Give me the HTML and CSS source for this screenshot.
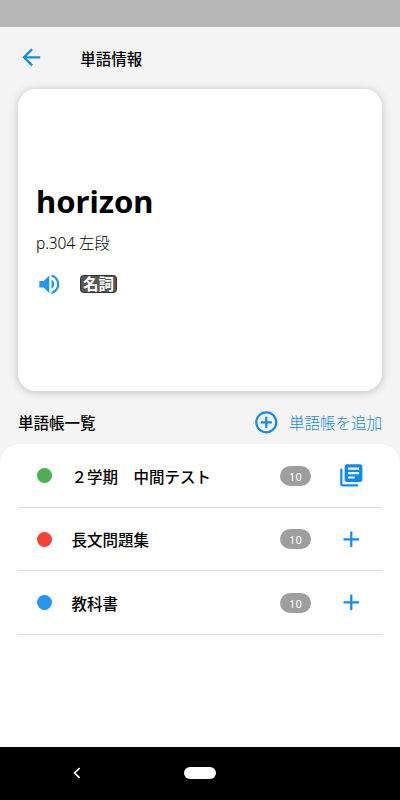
FILE: index.html
```html
<!DOCTYPE html>
<html lang="ja">
<head>
<meta charset="utf-8">
<title>単語情報</title>
<link rel="stylesheet" href="styles.css">
</head>
<body>
<div class="status"></div>
<header class="appbar">
  <svg class="icon" viewBox="0 0 24 24"><path d="M20 11H7.83l5.59-5.59L12 4l-8 8 8 8 1.41-1.41L7.83 13H20v-2z"/></svg>
  <h1 class="title">単語情報</h1>
</header>
<section class="card">
  <h2 class="word">horizon</h2>
  <p class="page">p.304 左段</p>
  <div class="meta">
    <svg class="icon speaker" viewBox="0 0 24 24"><path d="M3 9v6h4l5 5V4L7 9H3zm13.5 3c0-1.77-1.02-3.29-2.5-4.03v8.05c1.48-.73 2.5-2.25 2.5-4.02zM14 3.23v2.06c2.89.86 5 3.54 5 6.71s-2.11 5.85-5 6.71v2.06c4.01-.91 7-4.49 7-8.77s-2.99-7.86-7-8.77z"/></svg>
    <span class="tag">名詞</span>
  </div>
</section>
<div class="section-head">
  <h2 class="label">単語帳一覧</h2>
  <div class="add">
    <svg class="icon" viewBox="0 0 24 24"><path d="M13 7h-2v4H7v2h4v4h2v-4h4v-2h-4V7zm-1-5C6.48 2 2 6.48 2 12s4.48 10 10 10 10-4.48 10-10S17.52 2 12 2zm0 18c-4.41 0-8-3.59-8-8s3.59-8 8-8 8 3.59 8 8-3.59 8-8 8z"/></svg>
    <span class="add-text">単語帳を追加</span>
  </div>
</div>
<main class="list">
  <div class="row">
    <span class="dot green"></span><span class="name">２学期　中間テスト</span><span class="count">10</span>
    <svg class="icon" viewBox="0 0 24 24"><path d="M4 6H2v14c0 1.1.9 2 2 2h14v-2H4V6zm16-4H8c-1.1 0-2 .9-2 2v12c0 1.1.9 2 2 2h12c1.1 0 2-.9 2-2V4c0-1.1-.9-2-2-2zm-1 5H9V5h10v2zm0 4H9V9h10v2zm-4 4H9v-2h6v2z"/></svg>
  </div>
  <div class="row">
    <span class="dot red"></span><span class="name">長文問題集</span><span class="count">10</span>
    <svg class="icon" viewBox="0 0 24 24"><path d="M19 13h-6v6h-2v-6H5v-2h6V5h2v6h6v2z"/></svg>
  </div>
  <div class="row">
    <span class="dot blue"></span><span class="name">教科書</span><span class="count">10</span>
    <svg class="icon" viewBox="0 0 24 24"><path d="M19 13h-6v6h-2v-6H5v-2h6V5h2v6h6v2z"/></svg>
  </div>
</main>
<nav class="navbar">
  <svg class="back" viewBox="0 0 8 12"><path d="M6.6 1.2 1.6 6l5 4.8"/></svg>
  <span class="home"></span>
</nav>
</body>
</html>
```
FILE: styles.css
```css
* { box-sizing: border-box; }
body {
  margin: 0;
  width: 400px;
  height: 800px;
  overflow: hidden;
  display: flex;
  flex-direction: column;
  background: #f4f4f4;
  color: #000;
  font-family: "Noto Sans CJK JP", sans-serif;
  font-size: 15.5px;
}
h1, h2, p { margin: 0; }
.icon { width: 26.6px; height: 26.6px; fill: #0d8bf5; flex: none; display: block; }
.status { height: 26.5px; background: #b7b7b7; flex: none; }
.appbar {
  height: 62.5px;
  flex: none;
  display: flex;
  align-items: center;
  padding-left: 18px;
}
.title {
  margin-left: 35.6px;
  font-size: 15.5px;
  font-weight: 500;
  line-height: 24px;
}
.card {
  height: 302px;
  flex: none;
  margin: 0 18px;
  padding: 89px 18px 0;
  border-radius: 17.5px;
  background: #fff;
  box-shadow: 0 1px 8px rgba(0, 0, 0, .22);
}
.word {
  font-family: "Noto Sans", sans-serif;
  font-size: 31px;
  font-weight: 700;
  line-height: 46px;
}
.page {
  font-family: "Noto Sans", "Noto Sans CJK JP", sans-serif;
  font-size: 15.5px;
  letter-spacing: -.12px;
  font-weight: 300;
  line-height: 24px;
  margin-top: 7px;
}
.meta { display: flex; align-items: center; margin-top: 15.5px; }
.speaker { fill: #2196f3; }
.tag {
  width: 37px;
  height: 18px;
  margin-left: 17.4px;
  border: 1px solid #333;
  border-radius: 3.5px;
  background: #555;
  color: #fff;
  font-weight: 700;
  line-height: 15px;
  text-align: center;
}
.section-head {
  height: 53.3px;
  flex: none;
  padding: 9px 18px 0;
  display: flex;
  justify-content: space-between;
  align-items: flex-start;
}
.label { font-size: 15.5px; font-weight: 500; line-height: 44px; }
.add { display: flex; align-items: center; height: 44px; color: #0d8bf5; }
.add-text { margin-left: 9px; font-weight: 300; }
.list {
  flex: 1;
  padding: 0 18px;
  border-radius: 20px 20px 0 0;
  background: #fff;
}
.row {
  height: 63.5px;
  padding: 0 17.5px 0 19px;
  display: flex;
  align-items: center;
  border-bottom: 1px solid #dcdcdc;
}
.dot { width: 15px; height: 15px; border-radius: 50%; flex: none; }
.green { background: #4caf50; }
.red { background: #f44336; }
.blue { background: #2196f3; }
.name { flex: 1; margin-left: 19.4px; font-weight: 500; }
.count {
  width: 31px;
  height: 20px;
  margin-right: 27px;
  border-radius: 10px;
  background: #9e9e9e;
  color: #fff;
  font-family: "Noto Sans", sans-serif;
  font-size: 11px;
  line-height: 21px;
  text-align: center;
}
.navbar {
  height: 53.3px;
  flex: none;
  display: flex;
  align-items: center;
  padding-left: 72.5px;
  background: #000;
}
.back { width: 8px; height: 12px; fill: none; stroke: #fff; stroke-width: 1.7; }
.home { width: 32px; height: 12px; margin-left: 103.5px; border-radius: 6px; background: #fff; }
```
